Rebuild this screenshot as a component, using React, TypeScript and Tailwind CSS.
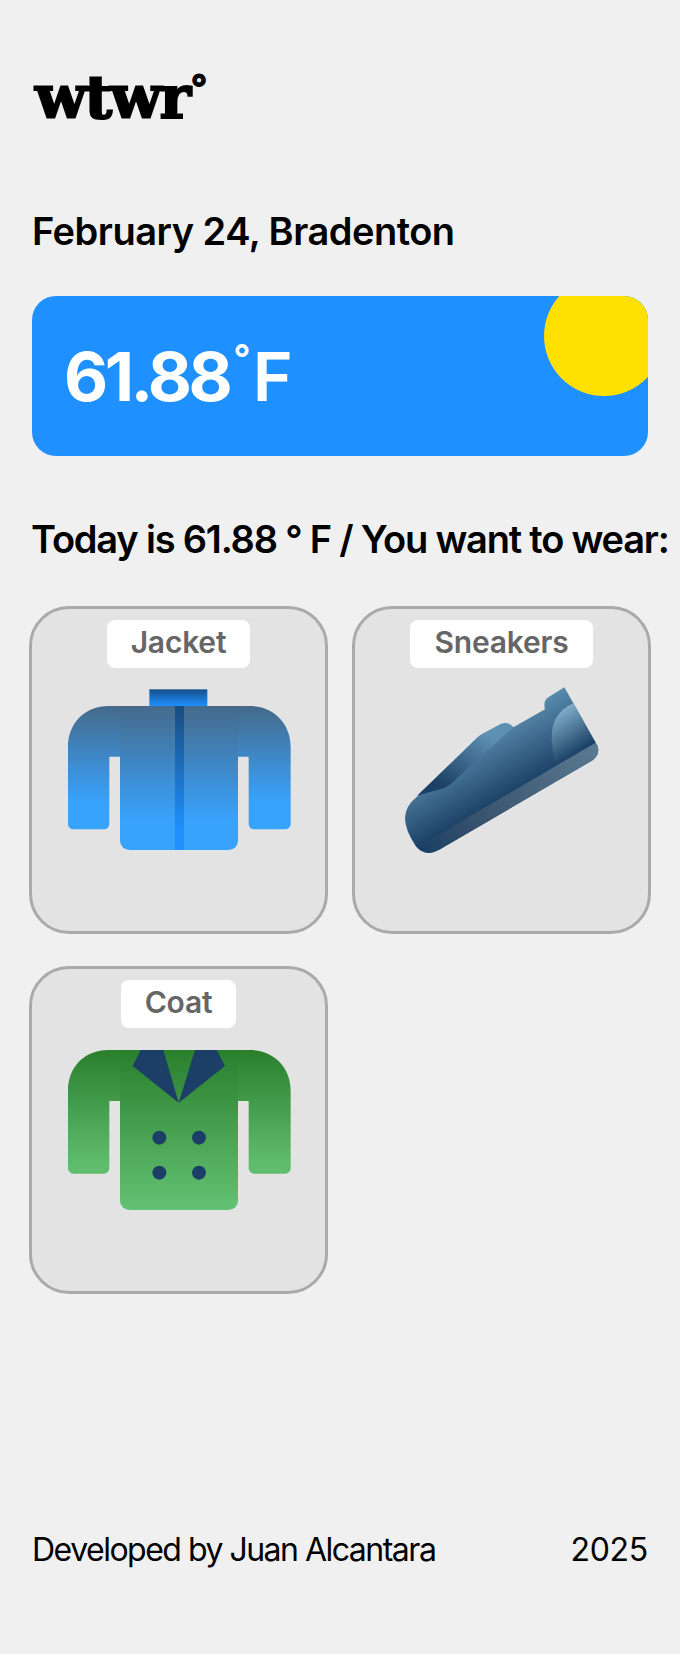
const font = "font-['Inter',sans-serif]";

function JacketIcon() {
  return (
    <svg width="224" height="180" viewBox="141 240 672 540" className="mt-3">
      <defs>
        <linearGradient id="jacketCollar" x1="0" y1="268" x2="0" y2="318" gradientUnits="userSpaceOnUse">
          <stop offset="0" stopColor="#15508c" />
          <stop offset="1" stopColor="#1e90ff" />
        </linearGradient>
        <linearGradient id="jacketSleeve" x1="0" y1="318" x2="0" y2="610" gradientUnits="userSpaceOnUse">
          <stop offset="0" stopColor="#456a8b" />
          <stop offset="1" stopColor="#38a3fd" />
        </linearGradient>
        <linearGradient id="jacketBody" x1="0" y1="318" x2="0" y2="665" gradientUnits="userSpaceOnUse">
          <stop offset="0" stopColor="#456a8b" />
          <stop offset="1" stopColor="#38a3fd" />
        </linearGradient>
        <linearGradient id="jacketZip" x1="0" y1="318" x2="0" y2="690" gradientUnits="userSpaceOnUse">
          <stop offset="0" stopColor="#1a4c7e" />
          <stop offset="1" stopColor="#1e90ff" />
        </linearGradient>
      </defs>
      <rect x="388" y="268" width="174" height="50" fill="url(#jacketCollar)" />
      <path
        d="M300 318 H265 C195 318 144 370 144 440 V672 a16 16 0 0 0 16 16 H252 a16 16 0 0 0 16 -16 V470 H300 Z"
        fill="url(#jacketSleeve)"
      />
      <path
        d="M654 318 H690 C760 318 812 370 812 440 V672 a16 16 0 0 1 -16 16 H702 a16 16 0 0 1 -16 -16 V470 H654 Z"
        fill="url(#jacketSleeve)"
      />
      <path d="M300 318 H654 V722 a28 28 0 0 1 -28 28 H328 a28 28 0 0 1 -28 -28 Z" fill="url(#jacketBody)" />
      <rect x="465" y="318" width="27" height="432" fill="url(#jacketZip)" />
    </svg>
  );
}

function SneakersIcon() {
  return (
    <svg width="224" height="180" viewBox="135 240 672 540" className="mt-3">
      <defs>
        <linearGradient id="shoeUpper" x1="440" y1="370" x2="545" y2="555" gradientUnits="userSpaceOnUse">
          <stop offset="0" stopColor="#5d90b2" />
          <stop offset="1" stopColor="#1c4166" />
        </linearGradient>
        <linearGradient id="shoeToe" x1="400" y1="390" x2="300" y2="560" gradientUnits="userSpaceOnUse">
          <stop offset="0" stopColor="#5d90b2" />
          <stop offset="1" stopColor="#1c4166" />
        </linearGradient>
        <linearGradient id="shoeCap" x1="640" y1="340" x2="710" y2="450" gradientUnits="userSpaceOnUse">
          <stop offset="0" stopColor="#7eabc6" />
          <stop offset="1" stopColor="#1c4166" />
        </linearGradient>
        <linearGradient id="shoeSole" x1="240" y1="745" x2="760" y2="440" gradientUnits="userSpaceOnUse">
          <stop offset="0" stopColor="#1c4166" />
          <stop offset="0.3" stopColor="#38536d" />
          <stop offset="1" stopColor="#5a7a92" />
        </linearGradient>
      </defs>
      <path
        d="M216 590 L392 418 Q400 408 412 402 L468 372 Q490 364 505 382 L600 328 C596 312 598 298 612 290 L658 262 L752 428 Q768 450 752 472 Q745 482 730 488 L285 748 Q240 774 212 738 Q180 690 180 655 Q180 618 216 590 Z"
        fill="url(#shoeUpper)"
      />
      <path
        d="M216 587 L392 418 Q400 408 412 402 L468 372 Q490 364 505 382 L340 530 Q315 560 285 568 Q250 578 216 587 Z"
        fill="url(#shoeToe)"
      />
      <path d="M685 310 C640 330 618 365 620 420 Q622 455 632 488 L752 428 Z" fill="url(#shoeCap)" />
      <path d="M752 428 Q768 450 752 472 Q745 482 730 488 L285 748 Q265 760 245 758 L232 732 Z" fill="url(#shoeSole)" />
    </svg>
  );
}

function CoatIcon() {
  return (
    <svg width="224" height="180" viewBox="141 240 672 540" className="mt-3">
      <defs>
        <linearGradient id="coatSleeve" x1="0" y1="270" x2="0" y2="615" gradientUnits="userSpaceOnUse">
          <stop offset="0" stopColor="#2a7f2c" />
          <stop offset="1" stopColor="#60bd6e" />
        </linearGradient>
        <linearGradient id="coatBody" x1="0" y1="270" x2="0" y2="735" gradientUnits="userSpaceOnUse">
          <stop offset="0" stopColor="#2a7f2c" />
          <stop offset="1" stopColor="#62c072" />
        </linearGradient>
      </defs>
      <path
        d="M300 270 H265 C195 270 144 320 144 392 V625 a16 16 0 0 0 16 16 H252 a16 16 0 0 0 16 -16 V423 H300 Z"
        fill="url(#coatSleeve)"
      />
      <path
        d="M654 270 H690 C760 270 812 320 812 392 V625 a16 16 0 0 1 -16 16 H702 a16 16 0 0 1 -16 -16 V423 H654 Z"
        fill="url(#coatSleeve)"
      />
      <path d="M300 270 H654 V722 a28 28 0 0 1 -28 28 H328 a28 28 0 0 1 -28 -28 Z" fill="url(#coatBody)" />
      <polygon points="362,270 430,270 476,428 338,318" fill="#1b3f66" />
      <polygon points="525,270 590,270 615,318 476,428" fill="#1b3f66" />
      <circle cx="418" cy="533" r="21" fill="#1b3f66" />
      <circle cx="537" cy="533" r="21" fill="#1b3f66" />
      <circle cx="418" cy="638" r="21" fill="#1b3f66" />
      <circle cx="537" cy="638" r="21" fill="#1b3f66" />
    </svg>
  );
}

function ItemCard({ name, children }: { name: string; children: React.ReactNode }) {
  return (
    <li className="flex h-[328px] flex-col items-center rounded-[40px] border-[3px] border-[#aaaaaa] bg-[#e3e3e3] pt-[11px]">
      <p className={`h-12 rounded-lg bg-white px-6 text-[30px] font-semibold leading-[44px] tracking-[-0.2px] text-[#666666] ${font}`}>
        {name}
      </p>
      {children}
    </li>
  );
}

export default function App() {
  return (
    <div className={`flex h-[1654px] w-[680px] flex-col overflow-hidden bg-[#f0f0f0] px-8 text-black ${font}`}>
      <header className="pt-[62px]">
        <h1 className="ml-[3px] flex h-[70px] items-start font-['DejaVu_Serif',serif] text-[60px] font-bold leading-[70px] tracking-[-2.2px] [-webkit-text-stroke:2px_black]">
          wtwr
          <span className="ml-[2px] mt-[-10px] font-['Inter',sans-serif] text-[36px] font-bold [-webkit-text-stroke:1px_black]">°</span>
        </h1>
        <h2 className="mt-[77px] text-[38px] font-semibold leading-[44px] tracking-[-0.5px]">February 24, Bradenton</h2>
      </header>

      <section className="relative mt-[43px] flex h-[160px] items-center overflow-hidden rounded-3xl bg-[#1e90ff] pl-8">
        <p className="flex items-start text-[68px] font-bold leading-none tracking-[-3.5px] text-white">
          61.88
          <span className="ml-[4px] mt-[-3px] text-[38px] font-semibold tracking-normal">°</span>
          <span className="ml-[2px] font-semibold tracking-normal">F</span>
        </p>
        <div className="absolute left-[512px] top-[-20px] h-[120px] w-[120px] rounded-full bg-[#ffe000]" />
      </section>

      <h2 className="ml-[-1px] mt-[61px] whitespace-nowrap text-[38px] font-semibold leading-[44px] tracking-[-1.2px]">
        Today is 61.88 ° F / You want to wear:
      </h2>

      <ul className="mx-[-3px] mt-[45px] grid grid-cols-2 gap-x-6 gap-y-[32px]">
        <ItemCard name="Jacket">
          <JacketIcon />
        </ItemCard>
        <ItemCard name="Sneakers">
          <SneakersIcon />
        </ItemCard>
        <ItemCard name="Coat">
          <CoatIcon />
        </ItemCard>
      </ul>

      <footer className="mt-auto flex items-center justify-between pb-[84px] text-[32px] leading-[40px]">
        <p className="tracking-[-1.5px]">Developed by Juan Alcantara</p>
        <p className="tracking-[-0.3px]">2025</p>
      </footer>
    </div>
  );
}
